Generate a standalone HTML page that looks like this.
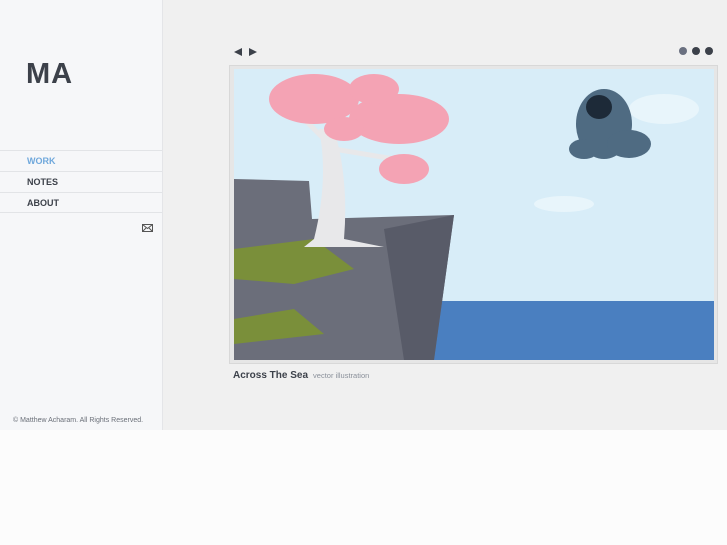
<!DOCTYPE html>
<html><head><meta charset="utf-8"><style>
*{margin:0;padding:0;box-sizing:border-box}
body{width:727px;height:545px;background:#fcfcfc;font-family:"Liberation Sans",sans-serif;position:relative;overflow:hidden}
#main{position:absolute;left:0;top:0;width:727px;height:430px;background:#f0f0f0}
#side{position:absolute;left:0;top:0;width:163px;height:430px;background:#f6f7f9;border-right:1px solid #e4e5e8}
.logo{position:absolute;left:26px;top:58px;font-size:29px;font-weight:bold;color:#3c414a;letter-spacing:1px}
.nav{position:absolute;left:0;top:150px;width:162px}
.nav div{height:21px;border-top:1px solid #e2e4e7;font-size:9px;font-weight:bold;color:#3c414a;padding:5px 0 0 27px}
.nav div:last-child{border-bottom:1px solid #e2e4e7}
.copy{position:absolute;left:13px;top:417px;font-size:7px;color:#6a6f78}
.frame{position:absolute;left:229px;top:65px;width:489px;height:299px;background:#e6e6e6;border:1px solid #d8d8d8}
.cap{position:absolute;left:233px;top:370px;font-size:10px;font-weight:bold;color:#3c414a}
.cap span{font-size:7.5px;font-weight:normal;color:#8a909a;margin-left:5px}
.dot{position:absolute;top:47px;width:8px;height:8px;border-radius:50%;background:#3c414a}
</style></head><body>
<div id="main"></div>
<div id="side">
<div class="logo">MA</div>
<div class="nav"><div style="color:#6fa8dc">WORK</div><div>NOTES</div><div>ABOUT</div></div>
<svg style="position:absolute;left:142px;top:224px" width="11" height="8" viewBox="0 0 11 8"><rect x=".5" y=".5" width="10" height="7" fill="none" stroke="#555"/><path d="M.5 .5L5.5 4.5L10.5 .5M.5 7.5L4 4M10.5 7.5L7 4" fill="none" stroke="#555"/></svg>
<div class="copy">© Matthew Acharam. All Rights Reserved.</div>
</div>
<svg style="position:absolute;left:234px;top:47px" width="24" height="10"><path d="M0 5L8 1V9Z M23 5L15 1V9Z" fill="#3c414a"/></svg>
<div class="dot" style="left:679px;background:#6a7080"></div><div class="dot" style="left:692px"></div><div class="dot" style="left:705px"></div>
<div class="frame">
<svg style="position:absolute;left:4px;top:3px" width="480" height="291" viewBox="0 0 480 291">
<rect width="480" height="291" fill="#d8edf8"/>
<ellipse cx="430" cy="40" rx="35" ry="15" fill="#e8f5fb"/>
<ellipse cx="330" cy="135" rx="30" ry="8" fill="#e8f5fb"/>
<rect y="232" width="480" height="59" fill="#4a7fc0"/>
<path d="M0 110L75 112L78 150L220 146L200 291L0 291Z" fill="#6b6e7a"/>
<path d="M150 160L220 146L200 291L170 291Z" fill="#585b68"/>
<path d="M0 180L80 170L120 200L60 215L0 210Z" fill="#7a8f3a"/>
<path d="M0 250L60 240L90 265L0 275Z" fill="#7a8f3a"/>
<path d="M80 170Q95 110 85 60L100 60Q115 110 110 170L150 178L70 178Z" fill="#e8e8ea"/>
<path d="M90 70L60 40M100 60L140 40M100 80L160 90" stroke="#e8e8ea" stroke-width="5"/>
<ellipse cx="80" cy="30" rx="45" ry="25" fill="#f4a3b4"/>
<ellipse cx="165" cy="50" rx="50" ry="25" fill="#f4a3b4"/>
<ellipse cx="140" cy="20" rx="25" ry="15" fill="#f4a3b4"/>
<ellipse cx="170" cy="100" rx="25" ry="15" fill="#f4a3b4"/>
<ellipse cx="110" cy="60" rx="20" ry="12" fill="#f4a3b4"/>
<ellipse cx="370" cy="55" rx="28" ry="35" fill="#4f6b82"/>
<ellipse cx="365" cy="38" rx="13" ry="12" fill="#1d2a38"/>
<ellipse cx="395" cy="75" rx="22" ry="14" fill="#4f6b82"/>
<ellipse cx="350" cy="80" rx="15" ry="10" fill="#4f6b82"/>
</svg>
</div>
<div class="cap">Across The Sea<span>vector illustration</span></div>
</body></html>
